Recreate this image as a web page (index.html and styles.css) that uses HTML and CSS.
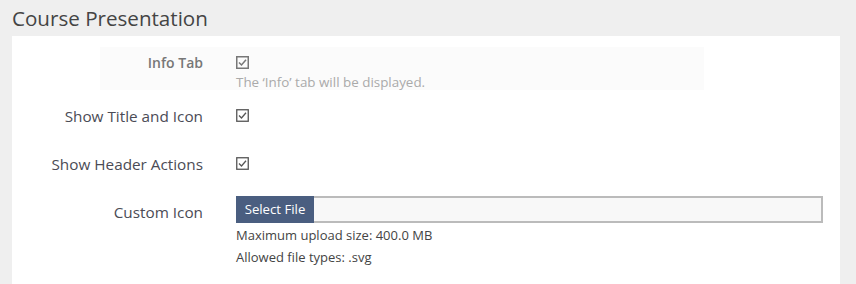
FILE: index.html
```html
<!DOCTYPE html>
<html>
<head>
<meta charset="utf-8">
<link rel="stylesheet" href="styles.css">
</head>
<body>
<h1 class="title">Course Presentation</h1>
<div class="card">
  <div class="row row-highlight">
    <div class="label label-bold">Info Tab</div>
    <div class="control">
      <span class="check"><svg width="13" height="13" viewBox="0 0 13 13"><rect x="0.75" y="0.75" width="11.5" height="11.5" fill="none" stroke="#777" stroke-width="1.5"/><path d="M3 6.5 L5.5 9 L10 3.8" fill="none" stroke="#777" stroke-width="1.5"/></svg></span>
      <div class="desc">The ‘Info’ tab will be displayed.</div>
    </div>
  </div>
  <div class="row row-plain">
    <div class="label">Show Title and Icon</div>
    <div class="control">
      <span class="check"><svg width="13" height="13" viewBox="0 0 13 13"><rect x="0.75" y="0.75" width="11.5" height="11.5" fill="none" stroke="#555" stroke-width="1.3"/><path d="M3 6.5 L5.5 9 L10 3.8" fill="none" stroke="#555" stroke-width="1.3"/></svg></span>
    </div>
  </div>
  <div class="row row-plain">
    <div class="label">Show Header Actions</div>
    <div class="control">
      <span class="check"><svg width="13" height="13" viewBox="0 0 13 13"><rect x="0.75" y="0.75" width="11.5" height="11.5" fill="none" stroke="#555" stroke-width="1.3"/><path d="M3 6.5 L5.5 9 L10 3.8" fill="none" stroke="#555" stroke-width="1.3"/></svg></span>
    </div>
  </div>
  <div class="row row-plain row-file">
    <div class="label label-file">Custom Icon</div>
    <div class="control">
      <div class="file">
        <span class="file-btn">Select File</span>
        <span class="file-name"></span>
      </div>
      <div class="hint hint-first">Maximum upload size: 400.0 MB</div>
      <div class="hint">Allowed file types: .svg</div>
    </div>
  </div>
</div>
</body>
</html>
```
FILE: styles.css
```css
html, body {
  margin: 0;
  padding: 0;
  height: 100%;
}
body {
  background: #efefef;
  font-family: "Open Sans", "Noto Sans", sans-serif;
  color: #4b4b55;
  overflow: hidden;
}
.title {
  margin: 0;
  padding: 4px 0 0 12px;
  height: 32px;
  font-size: 20.6px;
  font-weight: 400;
  line-height: 28px;
  color: #444;
}
.card {
  background: #fff;
  margin: 0 16px 0 12px;
  padding-top: 11px;
  height: 260px;
  box-sizing: border-box;
}
.row {
  display: grid;
  grid-template-columns: 191px 1fr;
  column-gap: 33px;
}
.row-highlight {
  background: #fbfbfb;
  margin-left: 88px;
  width: 604px;
  grid-template-columns: 103px 1fr;
  padding: 6px 0 3px;
  height: 43px;
  box-sizing: border-box;
}
.row-plain {
  margin-top: 16px;
}
.row-plain + .row-plain {
  margin-top: 28px;
}
.label {
  text-align: right;
  font-size: 15.3px;
  line-height: 20px;
  white-space: nowrap;
}
.label-bold {
  font-size: 14px;
  font-weight: 600;
  color: #777;
}
.check {
  display: block;
  height: 19px;
  padding-top: 3px;
  box-sizing: border-box;
}
.check svg {
  display: block;
}
.desc {
  font-size: 13.4px;
  line-height: 16px;
  color: #aaa;
  margin-top: 2px;
}
.row-plain.row-file {
  margin-top: 22px;
}
.label-file {
  padding-top: 6px;
}
.file {
  display: flex;
  height: 27px;
  margin-right: 17px;
}
.file-btn {
  background: #4a5e80;
  color: #fff;
  font-size: 13.2px;
  line-height: 27px;
  width: 78px;
  text-align: center;
  white-space: nowrap;
}
.file-name {
  flex: 1;
  background: #f8f8f8;
  border: 2px solid #bbb;
  border-left: none;
  box-sizing: border-box;
}
.hint {
  font-size: 13px;
  line-height: 22px;
  color: #444;
}
.hint-first {
  margin-top: 1px;
}
```
